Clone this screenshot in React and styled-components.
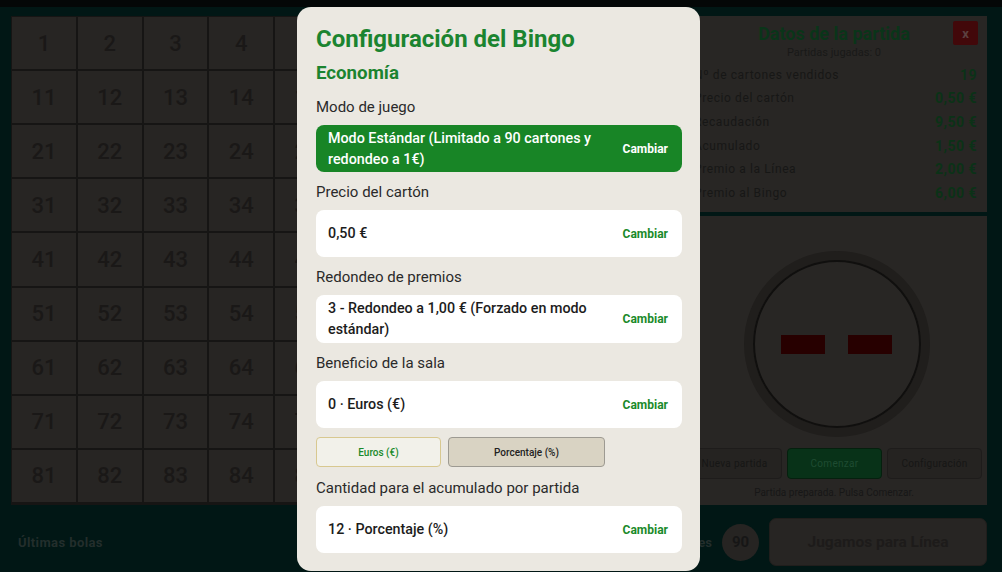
import React from "react";
import styled, { createGlobalStyle } from "styled-components";

const Global = createGlobalStyle`
  html, body { margin: 0; padding: 0; background: #040707; }
  body { font-family: Roboto, "Liberation Sans", sans-serif; }
  * { box-sizing: border-box; }
`;

/* background screen, drawn already dimmed behind the dialog */
const Screen = styled.div`
  position: relative;
  width: 1002px;
  height: 572px;
  overflow: hidden;
  background: #011715;
  display: flex;
  flex-direction: column;
`;

const StatusBar = styled.div`
  height: 7px;
  background: #040707;
  flex-shrink: 0;
`;

const Main = styled.div`
  display: flex;
  gap: 10px;
  padding: 9px 15px 0 11px;
`;

const Board = styled.div`
  width: 660px;
  height: 489px;
  display: grid;
  grid-template-columns: repeat(10, 1fr);
  grid-template-rows: repeat(9, 1fr);
  background: #272523;
  border: 1px solid #161514;
`;

const Cell = styled.div`
  display: flex;
  align-items: center;
  justify-content: center;
  border-right: 2px solid #161514;
  border-bottom: 2px solid #161514;
  color: #1a1817;
  font-size: 22px;
  font-weight: 500;
`;

const Side = styled.div`
  width: 306px;
  display: flex;
  flex-direction: column;
  gap: 4px;
`;

const Panel = styled.div`
  position: relative;
  background: #282624;
  height: ${(p) => p.h}px;
  display: flex;
  flex-direction: column;
`;

const PanelTitle = styled.div`
  text-align: center;
  color: #0a3519;
  font-size: 18px;
  font-weight: 700;
  margin-top: 7px;
`;

const Played = styled.div`
  text-align: center;
  color: #191918;
  font-size: 11px;
  margin-top: 2px;
  margin-bottom: 4px;
`;

const CloseBtn = styled.div`
  position: absolute;
  top: 5px;
  right: 9px;
  width: 25px;
  height: 24px;
  border-radius: 2px;
  background: #42080a;
  color: #5c4040;
  font-size: 13px;
  font-weight: 700;
  display: flex;
  align-items: center;
  justify-content: center;
`;

const StatRow = styled.div`
  display: flex;
  justify-content: space-between;
  align-items: center;
  height: 23.6px;
  padding: 0 10px 0 13px;
`;

const StatLabel = styled.span`
  color: #171716;
  font-size: 12px;
  letter-spacing: 0.6px;
`;

const StatValue = styled.span`
  color: #0b3217;
  font-size: 14px;
  font-weight: 700;
  letter-spacing: 0.5px;
`;

const DrumArea = styled.div`
  flex: 1;
  display: flex;
  align-items: center;
  justify-content: center;
  padding: 24px 0 0 5px;
`;

const Drum = styled.div`
  width: 186px;
  height: 186px;
  border-radius: 50%;
  border: 9px solid #201e1c;
  display: flex;
  align-items: center;
  justify-content: center;
`;

const DrumInner = styled.div`
  width: 100%;
  height: 100%;
  border-radius: 50%;
  border: 2px solid #100f0e;
  display: flex;
  align-items: center;
  justify-content: center;
  gap: 23px;
`;

const Dash = styled.div`
  width: 44px;
  height: 19px;
  background: #270000;
`;

const Controls = styled.div`
  display: grid;
  grid-template-columns: repeat(3, 95px);
  gap: 5px;
  padding: 0 8px 0 6px;
`;

const CtrlBtn = styled.div`
  height: 31px;
  border-radius: 4px;
  background: ${(p) => (p.primary ? "#083218" : "#252321")};
  border: 1px solid ${(p) => (p.primary ? "#05200e" : "#1e1c1b")};
  color: ${(p) => (p.primary ? "#1f4c32" : "#161615")};
  font-size: 10px;
  display: flex;
  align-items: center;
  justify-content: center;
  letter-spacing: 0.3px;
`;

const StatusText = styled.div`
  text-align: center;
  color: #171717;
  font-size: 10px;
  margin: 8px 0 7px;
`;

const BottomBar = styled.div`
  display: flex;
  align-items: center;
  padding: 13px 15px 0 18px;
  height: 61px;
`;

const LastBalls = styled.div`
  color: #232e2c;
  font-size: 13px;
  font-weight: 700;
  letter-spacing: 0.4px;
  flex: 1;
`;

const Remaining = styled.div`
  color: #232e2c;
  font-size: 13px;
  font-weight: 700;
  margin-right: 10px;
`;

const Ball = styled.div`
  width: 37px;
  height: 37px;
  border-radius: 50%;
  background: #262422;
  color: #161616;
  font-size: 15px;
  font-weight: 700;
  display: flex;
  align-items: center;
  justify-content: center;
  margin-right: 10px;
`;

const PlayBtn = styled.div`
  width: 218px;
  height: 48px;
  border-radius: 7px;
  background: #272523;
  border: 1px solid #201e1c;
  color: #1d1b1a;
  font-size: 15.5px;
  font-weight: 700;
  display: flex;
  align-items: center;
  justify-content: center;
`;

const Modal = styled.div`
  position: absolute;
  z-index: 10;
  left: 297px;
  top: 7px;
  width: 403px;
  height: 564px;
  border-radius: 14px;
  background: #ebe8e1;
  overflow: hidden;
  padding: 16px 18px 0 19px;
  display: flex;
  flex-direction: column;
`;

const ModalTitle = styled.h1`
  margin: 0;
  color: #1b8430;
  font-size: 24px;
  font-weight: 700;
  line-height: 33px;
`;

const Section = styled.h2`
  margin: 2px 0 9px;
  color: #1b8430;
  font-size: 18.7px;
  font-weight: 700;
  line-height: 30px;
`;

const FieldLabel = styled.div`
  color: #2a2a2a;
  font-size: 15px;
  line-height: 20px;
  margin-bottom: 8px;
`;

const Card = styled.div`
  display: flex;
  align-items: center;
  justify-content: space-between;
  gap: 12px;
  min-height: ${(p) => p.h ?? 47}px;
  border-radius: 8px;
  padding: 2px 14px 2px 12px;
  background: ${(p) => (p.active ? "#188526" : "#ffffff")};
  color: ${(p) => (p.active ? "#ffffff" : "#1c1c1c")};
  margin-bottom: ${(p) => p.mb ?? 10}px;
`;

const CardValue = styled.div`
  font-size: 14.3px;
  font-weight: 500;
  line-height: 21px;
`;

const Change = styled.span`
  font-size: 12px;
  font-weight: 700;
  color: ${(p) => (p.light ? "#ffffff" : "#1a8a2a")};
  flex-shrink: 0;
`;

const Toggles = styled.div`
  display: flex;
  gap: 7px;
  margin-bottom: 11px;
`;

const Toggle = styled.div`
  width: ${(p) => p.w}px;
  height: 30px;
  border-radius: 4px;
  font-size: 10px;
  font-weight: 500;
  display: flex;
  align-items: center;
  justify-content: center;
  background: ${(p) => (p.selected ? "#f2f1ea" : "#d9d3c3")};
  border: 1.5px solid ${(p) => (p.selected ? "#d8c890" : "#9d9a92")};
  color: ${(p) => (p.selected ? "#1a8a2a" : "#222")};
`;

const stats = [
  ["Nº de cartones vendidos", "19"],
  ["Precio del cartón", "0,50 €"],
  ["Recaudación", "9,50 €"],
  ["Acumulado", "1,50 €"],
  ["Premio a la Línea", "2,00 €"],
  ["Premio al Bingo", "6,00 €"],
];

const fields = [
  { label: "Precio del cartón", value: "0,50 €", h: 47 },
  { label: "Redondeo de premios", value: "3 - Redondeo a 1,00 € (Forzado en modo estándar)", h: 48 },
];

export default function App() {
  const numbers = Array.from({ length: 90 }, (_, i) => i + 1);
  return (
    <Screen>
      <Global />
      <StatusBar />
      <Main>
        <Board>
          {numbers.map((n) => (
            <Cell key={n}>{n}</Cell>
          ))}
        </Board>
        <Side>
          <Panel h={196}>
            <PanelTitle>Datos de la partida</PanelTitle>
            <Played>Partidas jugadas: 0</Played>
            <CloseBtn>x</CloseBtn>
            {stats.map(([l, v]) => (
              <StatRow key={l}>
                <StatLabel>{l}</StatLabel>
                <StatValue>{v}</StatValue>
              </StatRow>
            ))}
          </Panel>
          <Panel h={289}>
            <DrumArea>
              <Drum>
                <DrumInner>
                  <Dash />
                  <Dash />
                </DrumInner>
              </Drum>
            </DrumArea>
            <Controls>
              <CtrlBtn>Nueva partida</CtrlBtn>
              <CtrlBtn primary>Comenzar</CtrlBtn>
              <CtrlBtn>Configuración</CtrlBtn>
            </Controls>
            <StatusText>Partida preparada. Pulsa Comenzar.</StatusText>
          </Panel>
        </Side>
      </Main>
      <BottomBar>
        <LastBalls>Últimas bolas</LastBalls>
        <Remaining>Bolas restantes</Remaining>
        <Ball>90</Ball>
        <PlayBtn>Jugamos para Línea</PlayBtn>
      </BottomBar>
      <Modal>
        <ModalTitle>Configuración del Bingo</ModalTitle>
        <Section>Economía</Section>
        <FieldLabel>Modo de juego</FieldLabel>
        <Card active>
          <CardValue>Modo Estándar (Limitado a 90 cartones y redondeo a 1€)</CardValue>
          <Change light>Cambiar</Change>
        </Card>
        {fields.map((f) => (
          <React.Fragment key={f.label}>
            <FieldLabel>{f.label}</FieldLabel>
            <Card h={f.h}>
              <CardValue>{f.value}</CardValue>
              <Change>Cambiar</Change>
            </Card>
          </React.Fragment>
        ))}
        <FieldLabel>Beneficio de la sala</FieldLabel>
        <Card mb={9}>
          <CardValue>0 · Euros (€)</CardValue>
          <Change>Cambiar</Change>
        </Card>
        <Toggles>
          <Toggle w={125} selected>Euros (€)</Toggle>
          <Toggle w={157}>Porcentaje (%)</Toggle>
        </Toggles>
        <FieldLabel>Cantidad para el acumulado por partida</FieldLabel>
        <Card>
          <CardValue>12 · Porcentaje (%)</CardValue>
          <Change>Cambiar</Change>
        </Card>
      </Modal>
    </Screen>
  );
}
